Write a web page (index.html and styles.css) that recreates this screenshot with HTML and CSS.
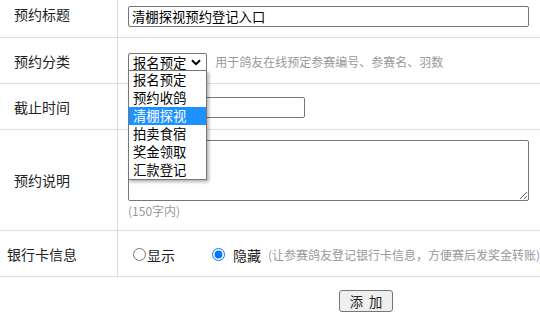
FILE: index.html
```html
<!DOCTYPE html>
<html lang="zh-CN">
<head>
<meta charset="utf-8">
<title>预约登记</title>
<link rel="stylesheet" href="styles.css">
</head>
<body>
<table class="form">
  <tr class="r-title">
    <td class="lbl">预约标题</td>
    <td class="val"><input class="txt txt-title" type="text" value="清棚探视预约登记入口"></td>
  </tr>
  <tr class="r46">
    <td class="lbl">预约分类</td>
    <td class="val">
      <span class="sel-wrap">
        <span class="sel">报名预定<svg class="chev" width="10" height="7" viewBox="0 0 10 7"><path d="M1 1.2 L5 5.2 L9 1.2" fill="none" stroke="#000" stroke-width="2"/></svg></span>
        <span class="popup">
          <span class="opt">报名预定</span>
          <span class="opt">预约收鸽</span>
          <span class="opt on">清棚探视</span>
          <span class="opt">拍卖食宿</span>
          <span class="opt">奖金领取</span>
          <span class="opt">汇款登记</span>
        </span>
      </span>
      <span class="hint hint-sel">用于鸽友在线预定参赛编号、参赛名、羽数</span>
    </td>
  </tr>
  <tr class="r46">
    <td class="lbl">截止时间</td>
    <td class="val"><input class="txt txt-date" type="text" value=""></td>
  </tr>
  <tr class="r-desc">
    <td class="lbl">预约说明</td>
    <td class="val val-desc">
      <textarea class="area"></textarea>
      <div class="hint">(150字内)</div>
    </td>
  </tr>
  <tr class="r46">
    <td class="lbl">银行卡信息</td>
    <td class="val nowrap">
      <label class="rad"><input type="radio" name="bank">显示</label><label class="rad rad2"><input type="radio" name="bank" checked>隐藏</label><span class="hint hint-bank">(让参赛鸽友登记银行卡信息，方便赛后发奖金转账)</span>
    </td>
  </tr>
</table>
<div class="actions"><button class="btn" type="button">添 加</button></div>
</body>
</html>
```

FILE: styles.css
```css
html, body {
  margin: 0;
  padding: 0;
  background: #fff;
  overflow: hidden;
}
body {
  width: 540px;
  height: 319px;
  font-family: "Noto Sans CJK SC", "Microsoft YaHei", sans-serif;
  font-size: 14px;
  color: #222;
}
.form {
  width: 540px;
  border-collapse: separate;
  border-spacing: 0;
  table-layout: fixed;
}
.form td {
  box-sizing: border-box;
  border-bottom: 1px solid #d3dee6;
  padding: 0;
  vertical-align: middle;
}
.form td.lbl {
  width: 118px;
  border-right: 1px solid #d3dee6;
  text-align: center;
  padding-right: 33px;
  line-height: 20px;
  white-space: nowrap;
}
.form td.val {
  padding-left: 10px;
  white-space: nowrap;
  overflow: hidden;
}
.r-title td {
  height: 38px;
  vertical-align: top;
  padding-top: 4px;
}
.r-title td.lbl {
  line-height: 21px;
}
.r46 td { height: 46px; }
.r-desc td { height: 101px; }
.form td.val-desc {
  vertical-align: top;
  padding-top: 10px;
  overflow: visible;
}
.form tr.r46:nth-child(2) td.val { overflow: visible; }

.txt {
  box-sizing: border-box;
  height: 21px;
  margin: 0;
  padding: 0 3px;
  border: 1px solid #767676;
  border-radius: 2px;
  font-family: "Noto Sans CJK SC", sans-serif;
  font-size: 13.33px;
  color: #000;
  vertical-align: middle;
  outline: none;
}
.txt-title { width: 401px; }
.txt-date { width: 177px; }

.sel-wrap {
  position: relative;
  display: inline-block;
  vertical-align: middle;
}
.sel {
  box-sizing: border-box;
  display: inline-flex;
  align-items: center;
  width: 79px;
  height: 19px;
  padding-left: 4px;
  border: 1px solid #767676;
  border-radius: 2px;
  font-size: 13.33px;
  line-height: 17px;
  color: #000;
  background: #fff;
}
.chev { margin-left: 5px; }
.popup {
  position: absolute;
  left: 0;
  top: 18px;
  box-sizing: border-box;
  width: 79px;
  padding: 0;
  border: 1px solid #767676;
  background: #fff;
  box-shadow: 2px 2px 3px rgba(0,0,0,0.3);
  display: flex;
  flex-direction: column;
  z-index: 5;
}
.opt {
  display: block;
  height: 18px;
  line-height: 18px;
  padding-left: 4px;
  font-size: 13.33px;
  color: #000;
}
.opt.on {
  background: #1e90ff;
  color: #fff;
}
.hint {
  font-size: 12px;
  color: #999;
}
.hint-sel {
  margin-left: 5px;
  vertical-align: middle;
}
.area {
  display: block;
  box-sizing: border-box;
  width: 401px;
  height: 61px;
  margin: 0;
  border: 1px solid #767676;
  border-radius: 2px;
  resize: both;
  outline: none;
}
.val-desc .hint {
  margin-top: 1px;
  line-height: 17px;
}
.rad {
  display: inline-flex;
  align-items: center;
  vertical-align: middle;
}
.rad input {
  margin: 0 1px 0 5px;
  width: 13px;
  height: 13px;
}
.rad2 { margin-left: 32px; }
.rad2 input { margin-right: 8px; }
.hint-bank {
  margin-left: 7px;
  vertical-align: middle;
}
.actions {
  padding: 13px 0 0 339px;
}
.btn {
  box-sizing: border-box;
  width: 54px;
  height: 22px;
  margin: 0;
  padding: 0;
  border: 1px solid #767676;
  border-radius: 3px;
  background: #efefef;
  font-family: "Noto Sans CJK SC", sans-serif;
  font-size: 13.33px;
  word-spacing: 3px;
  color: #222;
}
```
